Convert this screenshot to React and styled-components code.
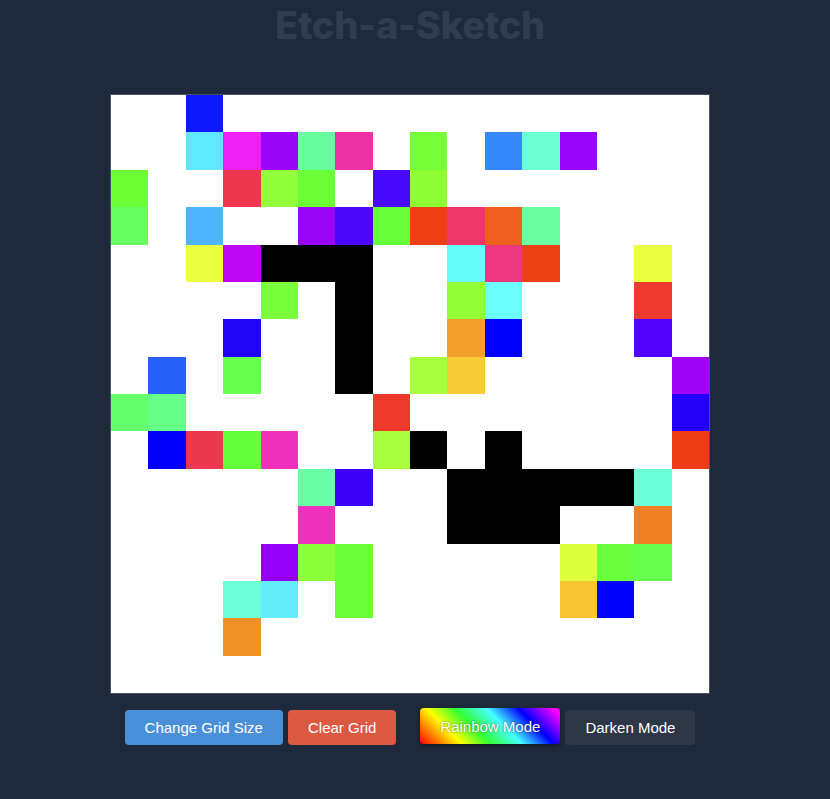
import React, { useState } from 'react';
import styled, { createGlobalStyle } from 'styled-components';

const SIZE = 16;

// painted cells: [row, col, colour]
const PAINTED = [
  [0, 2, '#0d18fd'],
  [1, 2, '#5fe9fc'], [1, 3, '#ee1ff2'], [1, 4, '#9a05f7'], [1, 5, '#68fea0'], [1, 6, '#ee30a5'],
  [1, 8, '#74ff38'], [1, 10, '#3687fb'], [1, 11, '#6cffd2'], [1, 12, '#9904fb'],
  [2, 0, '#6cff36'], [2, 3, '#ee3650'], [2, 4, '#92ff3c'], [2, 5, '#6cff38'], [2, 7, '#4808fa'], [2, 8, '#8eff34'],
  [3, 0, '#66ff60'], [3, 2, '#4db6fb'], [3, 5, '#9a06f5'], [3, 6, '#4a08f8'], [3, 7, '#66ff38'],
  [3, 8, '#ee3e16'], [3, 9, '#ee3668'], [3, 10, '#ee601e'], [3, 11, '#6cffa2'],
  [4, 2, '#eaff40'], [4, 3, '#bd06f6'], [4, 4, '#000'], [4, 5, '#000'], [4, 6, '#000'],
  [4, 9, '#66fcfc'], [4, 10, '#ee3680'], [4, 11, '#ee4016'], [4, 14, '#eaff40'],
  [5, 4, '#7aff3a'], [5, 6, '#000'], [5, 9, '#92ff36'], [5, 10, '#6afefc'], [5, 14, '#ee3a2e'],
  [6, 3, '#2004f8'], [6, 6, '#000'], [6, 9, '#f2a02c'], [6, 10, '#0000ff'], [6, 14, '#5004fa'],
  [7, 1, '#2860fa'], [7, 3, '#68ff4e'], [7, 6, '#000'], [7, 8, '#a6ff3a'], [7, 9, '#f8cc34'], [7, 15, '#a004f7'],
  [8, 0, '#66ff6c'], [8, 1, '#66ff88'], [8, 7, '#ee3a2a'], [8, 15, '#2400f8'],
  [9, 1, '#0000fa'], [9, 2, '#ee3852'], [9, 3, '#66ff3c'], [9, 4, '#ee30bc'], [9, 7, '#a6ff3a'],
  [9, 8, '#000'], [9, 10, '#000'], [9, 15, '#ee3c18'],
  [10, 5, '#68ffa6'], [10, 6, '#3a00fa'], [10, 9, '#000'], [10, 10, '#000'], [10, 11, '#000'],
  [10, 12, '#000'], [10, 13, '#000'], [10, 14, '#6affd8'],
  [11, 5, '#ee30bc'], [11, 9, '#000'], [11, 10, '#000'], [11, 11, '#000'], [11, 14, '#ef8024'],
  [12, 4, '#9400fa'], [12, 5, '#8cff3a'], [12, 6, '#6aff38'], [12, 12, '#deff3e'], [12, 13, '#6aff3c'], [12, 14, '#66ff4c'],
  [13, 3, '#6cffd8'], [13, 4, '#64eefc'], [13, 6, '#6aff38'], [13, 12, '#f8c430'], [13, 13, '#0000ff'],
  [14, 3, '#f29028'],
];

const buildGrid = () => {
  const cells = Array(SIZE * SIZE).fill(null);
  PAINTED.forEach(([r, c, color]) => { cells[r * SIZE + c] = color; });
  return cells;
};

const App = () => {
  const [cells, setCells] = useState(buildGrid);
  const [mode, setMode] = useState('rainbow');

  const paint = (i) => {
    setCells((prev) => {
      const next = [...prev];
      if (mode === 'darken') next[i] = '#000';
      else next[i] = `hsl(${Math.floor(Math.random() * 360)}, 100%, 60%)`;
      return next;
    });
  };

  return (
    <Page>
      <GlobalStyle />
      <Title>Etch-a-Sketch</Title>

      <Board $size={SIZE}>
        {cells.map((color, i) => (
          <Cell key={i} $color={color} onMouseEnter={() => paint(i)} />
        ))}
      </Board>

      <Controls>
        <Group>
          <Button $bg="#4a90d9">Change Grid Size</Button>
          <Button $bg="#dc5a41" onClick={() => setCells(Array(SIZE * SIZE).fill(null))}>Clear Grid</Button>
        </Group>
        <Group>
          <RainbowButton $active={mode === 'rainbow'} onClick={() => setMode('rainbow')}>Rainbow Mode</RainbowButton>
          <Button $bg="#2d3748" onClick={() => setMode('darken')}>Darken Mode</Button>
        </Group>
      </Controls>
    </Page>
  );
};

const GlobalStyle = createGlobalStyle`
  html, body { margin: 0; padding: 0; background: #1e293b; }
  body { font-family: "Liberation Sans", Arial, sans-serif; }
`;

const Page = styled.div`
  min-height: 100vh;
  background: #1e293b;
  display: flex;
  flex-direction: column;
  align-items: center;
  padding-right: 10px;
  box-sizing: border-box;
`;

const Title = styled.h1`
  margin: 4px 0 0;
  font-family: Inter, "Noto Sans", sans-serif;
  font-weight: 800;
  font-size: 38px;
  line-height: 42px;
  color: #303c50;
  letter-spacing: -0.2px;
`;

const Board = styled.div`
  margin-top: 48px;
  width: 600px;
  height: 600px;
  box-sizing: border-box;
  border: 1px solid #4a5263;
  background: #fff;
  display: grid;
  grid-template-columns: repeat(${(p) => p.$size}, 1fr);
  grid-template-rows: repeat(${(p) => p.$size}, 1fr);
`;

const Cell = styled.div`
  background: ${(p) => p.$color || '#fff'};
`;

const Controls = styled.div`
  margin-top: 16px;
  display: flex;
  align-items: flex-start;
  gap: 24px;
`;

const Group = styled.div`
  display: flex;
  align-items: flex-start;
  gap: 5px;
`;

const Button = styled.button`
  height: 35px;
  padding: 0 20px;
  border: none;
  border-radius: 4px;
  background: ${(p) => p.$bg};
  color: #fff;
  font-family: "Liberation Sans", Arial, sans-serif;
  font-size: 15px;
  cursor: pointer;
`;

const RainbowButton = styled(Button)`
  margin-top: ${(p) => (p.$active ? '-2px' : '0')};
  height: 36px;
  padding: 0 20px;
  background: linear-gradient(45deg, #f00 0%, #ff8000 12%, #ff0 24%, #3f3 40%, #4ff 58%, #00f 76%, #f0f 96%);
  text-shadow: 0 0 2px rgba(0, 0, 0, 0.6);
  box-shadow: 0 2px 4px rgba(0, 0, 0, 0.35);
`;

export default App;
